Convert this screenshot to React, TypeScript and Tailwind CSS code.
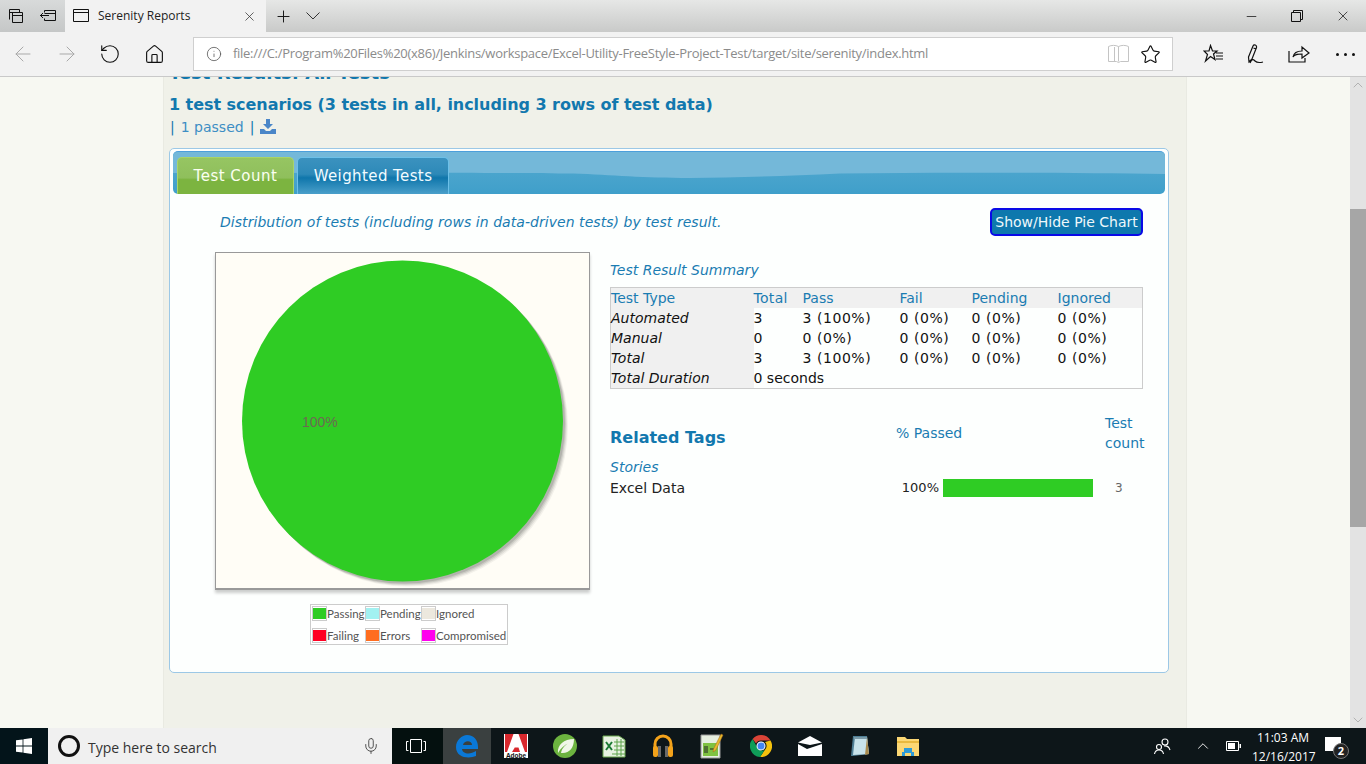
import { ChevronDown, ChevronUp, Minus, Plus, X, ArrowLeft, ArrowRight, RotateCw, Home, Info, Star, Mic } from "lucide-react";

const verdana = "font-['DejaVu_Sans',sans-serif]";

const summaryRows = [
  { type: "Automated", total: "3", pass: "3 (100%)" },
  { type: "Manual", total: "0", pass: "0 (0%)" },
  { type: "Total", total: "3", pass: "3 (100%)" },
];

const legend = [
  { label: "Passing", color: "bg-[#2fcc24]", w: "w-[53px]" },
  { label: "Pending", color: "bg-[#a2f1f1]", w: "w-[56px]" },
  { label: "Ignored", color: "bg-[#ece8de]", w: "w-[87px]" },
  { label: "Failing", color: "bg-[#ff0022]", w: "w-[53px]" },
  { label: "Errors", color: "bg-[#ff6d1f]", w: "w-[56px]" },
  { label: "Compromised", color: "bg-[#ff00ee]", w: "w-[87px]" },
];

function TitleBar() {
  return (
    <div className="flex h-8 shrink-0 items-stretch bg-gradient-to-b from-[#e6e7e6] to-[#c9cac9] text-black">
      <div className="flex w-[65px] shrink-0 items-center bg-gradient-to-b from-[#d8dada] to-[#c5c7c7]">
        <svg className="ml-[9px] h-[14px] w-[14px]" viewBox="0 0 14 14" fill="none" stroke="#111">
          <path d="M.5 10.500V.5h10v3M.5 3.500h10" />
          <path d="M3.500 13.500v-10h10v10zM3.500 6.500h10" />
        </svg>
        <svg className="ml-[17px] h-[12px] w-[16px]" viewBox="0 0 16 12" fill="none" stroke="#111">
          <path d="M4.500 2.500V.5h11v10h-11V8.500M0 5.500h9M3 3 .5 5.500 3 8M4.500 3.500h11" />
        </svg>
      </div>
      <div className="flex w-[201px] shrink-0 items-center bg-[#f2f2f2]">
        <svg className="ml-[8px] h-[14px] w-[16px]" viewBox="0 0 16 14" fill="none" stroke="#111">
          <path d="M.5.5h15v12h-15zM.5 3.500h15" />
        </svg>
        <span className="ml-[9px] font-['Open_Sans',sans-serif] text-[12px] text-[#222]">Serenity Reports</span>
        <X className="ml-auto mr-[9px] h-[15px] w-[15px] text-[#333]" strokeWidth={1.2} />
      </div>
      <Plus className="ml-[8px] mt-[7px] h-[19px] w-[19px] text-[#111]" strokeWidth={1.2} />
      <svg className="ml-[13px] mt-[12px] h-[8px] w-[14px]" viewBox="0 0 14 8" fill="none" stroke="#333">
        <path d="m.5.5 6.500 6.500 6.500-6.500" />
      </svg>
      <div className="ml-auto flex items-center">
        <Minus className="mr-[32px] h-[15px] w-[15px] text-[#111]" strokeWidth={1.2} />
        <svg className="mr-[32px] h-[12px] w-[12px]" viewBox="0 0 12 12" fill="none" stroke="#111">
          <path d="M.5 2.500h9v9h-9zM2.500 2.500v-2h9v9h-2" />
        </svg>
        <X className="mr-[15px] h-[16px] w-[16px] text-[#111]" strokeWidth={1.1} />
      </div>
    </div>
  );
}

function AddressBar() {
  return (
    <div className="flex h-[45px] shrink-0 items-center border-b border-[#c9c9c9] bg-[#f2f2f2]">
      <ArrowLeft className="ml-[11px] h-[24px] w-[24px] text-[#a9a9a9]" strokeWidth={1} />
      <ArrowRight className="ml-[20px] h-[24px] w-[24px] text-[#a9a9a9]" strokeWidth={1} />
      <RotateCw className="ml-[20px] h-[22px] w-[22px] -scale-x-100 text-[#111]" strokeWidth={1.2} />
      <Home className="ml-[23px] h-[21px] w-[21px] text-[#111]" strokeWidth={1.3} />
      <div className="ml-[28px] flex h-[34px] w-[980px] items-center border border-[#cfcfcf] bg-white">
        <Info className="ml-[12px] h-[16px] w-[16px] text-[#555]" strokeWidth={1.2} />
        <span className="ml-[11px] font-['Open_Sans',sans-serif] text-[13px] tracking-[-0.29px] text-[#8b8b8b]">
          file:///C:/Program%20Files%20(x86)/Jenkins/workspace/Excel-Utility-FreeStyle-Project-Test/target/site/serenity/index.html
        </span>
        <svg className="ml-auto h-[20px] w-[21px]" viewBox="0 0 21 20" fill="none" stroke="#c4c4c4">
          <path d="M.5 2.500c3-1.500 7-1.500 10 0 3-1.500 7-1.500 10 0v15h-8l-2 1-2-1h-8zM10.500 2.500v15M6.500 3v14" />
        </svg>
        <Star className="ml-[11px] mr-[11px] h-[21px] w-[21px] text-[#111]" strokeWidth={1.3} />
      </div>
      <svg className="ml-[30px] h-[20px] w-[21px]" viewBox="0 0 21 20" fill="none" stroke="#111" strokeWidth="1.2">
        <path d="M7.500 1.500 9.500 7H14L10.500 10l1.500 5.500L7.500 12.500 2.500 17 4.500 10.500 1 7h5zM13 9h7M13 12h7M13 15h7" />
      </svg>
      <svg className="ml-[23px] h-[21px] w-[19px]" viewBox="0 0 19 21" fill="none" stroke="#111" strokeWidth="1.2">
        <path d="M1.500 13 6 2c1-2 4-1 3.500 1.500L5 15l-3 3zM6.500 4 9 5M3 19c2-4 3-4 5-2 2 2 4 2 8 1" />
      </svg>
      <svg className="ml-[22px] h-[20px] w-[22px]" viewBox="0 0 22 20" fill="none" stroke="#111" strokeWidth="1.2">
        <path d="M1 7v11h16v-4M5 13c1-5 5-6 9-6V3l7 6-7 5v-4c-4 0-7 0-9 3z" />
      </svg>
      <div className="ml-[26px] flex gap-[5px]">
        <span className="h-[3px] w-[3px] rounded-full bg-[#111]" />
        <span className="h-[3px] w-[3px] rounded-full bg-[#111]" />
        <span className="h-[3px] w-[3px] rounded-full bg-[#111]" />
      </div>
    </div>
  );
}

function Tabs() {
  return (
    <div className="relative mx-[3px] mt-[2px] flex h-[43px] items-end overflow-hidden rounded-[5px] border-t border-[#4c9fdb] bg-gradient-to-b from-[#55aad0] to-[#3f9fca] pl-[4px]">
      <svg className="absolute inset-0 h-full w-full" viewBox="0 0 992 42" preserveAspectRatio="none">
        <path d="M0 0h992v22C900 21 780 20 667 21.500 610 24 560 26 517 26 470 26 440 23 400 21.500 300 20 100 21 0 21z" fill="#74b8d9" />
      </svg>
      <div className={`relative flex h-[37px] w-[117px] items-center justify-center rounded-t-[5px] border border-b-0 border-[#a8d468] bg-[linear-gradient(#96c562_0,#8fbf5c_55%,#7cb440_60%,#7cb440_100%)] text-[15px] tracking-[0.5px] text-[#fbfff0] ${verdana}`}>
        Test Count
      </div>
      <div className={`relative ml-[3px] flex h-[37px] w-[152px] items-center justify-center rounded-t-[5px] border border-b-0 border-[#6cc0e8] bg-[linear-gradient(#3b92bf_0,#2d89b8_45%,#0f76ab_55%,#4a9fca_100%)] text-[15px] tracking-[0.4px] text-[#f2fbff] ${verdana}`}>
        Weighted Tests
      </div>
    </div>
  );
}

function PieChart() {
  return (
    <div>
      <div className="relative h-[338px] w-[375px] border border-b-2 border-[#999] bg-[#fffdf6] shadow-[0_3px_3px_rgba(0,0,0,0.2)]">
        <svg className="h-full w-full" viewBox="0 0 373 335">
          <circle cx="191.500" cy="173" r="160.500" fill="#0000000c" />
          <circle cx="190.500" cy="172" r="160.500" fill="#00000012" />
          <circle cx="189.500" cy="171" r="160.500" fill="#00000018" />
          <circle cx="188.500" cy="170" r="160.500" fill="#0000001e" />
          <circle cx="186.500" cy="168" r="160.500" fill="#2fcc24" />
        </svg>
        <span className="absolute left-[86px] top-[161px] font-['Liberation_Sans',sans-serif] text-[14px] leading-4 text-[#6d6a52]">100%</span>
      </div>
      <div className="ml-[95px] mt-[14px] flex w-[198px] flex-wrap border border-[#ccc] bg-white font-['Lato',sans-serif] text-[11.500px] text-[#545454]">
        {legend.map((item) => (
          <div key={item.label} className={`flex h-[17px] items-center ${item.w} [&:nth-child(-n+3)]:mb-[5px]`}>
            <span className="ml-px flex h-[15px] w-[15px] shrink-0 items-center justify-center border border-[#ccc]">
              <span className={`h-[11px] w-[13px] ${item.color}`} />
            </span>
            <span className="whitespace-nowrap">{item.label}</span>
          </div>
        ))}
      </div>
    </div>
  );
}

function SummaryTable() {
  const th = "h-5 p-0 text-left font-normal text-[#1a7cb2]";
  const label = "h-5 bg-[#f0f0f0] p-0 italic";
  const pct = "p-0 tracking-[0.55px]";
  return (
    <table className="w-[533px] table-fixed border-collapse border border-[#ccc] text-[14px] leading-5 text-[#111]">
      <colgroup>
        <col className="w-[143px]" />
        <col className="w-[49px]" />
        <col className="w-[97px]" />
        <col className="w-[72px]" />
        <col className="w-[86px]" />
        <col />
      </colgroup>
      <thead>
        <tr className="bg-[#f0f0f0]">
          <th className={th}>Test Type</th>
          <th className={`${th} tracking-[0.3px]`}>Total</th>
          <th className={th}>Pass</th>
          <th className={th}>Fail</th>
          <th className={th}>Pending</th>
          <th className={th}>Ignored</th>
        </tr>
      </thead>
      <tbody>
        {summaryRows.map((row) => (
          <tr key={row.type}>
            <td className={label}>{row.type}</td>
            <td className="p-0">{row.total}</td>
            <td className={pct}>{row.pass}</td>
            <td className={pct}>0 (0%)</td>
            <td className={pct}>0 (0%)</td>
            <td className={pct}>0 (0%)</td>
          </tr>
        ))}
        <tr>
          <td className={label}>Total Duration</td>
          <td className="p-0" colSpan={5}>0 seconds</td>
        </tr>
      </tbody>
    </table>
  );
}

function RelatedTags() {
  return (
    <div className="mt-[26px]">
      <div className="flex h-[40px] items-stretch text-[14px] leading-5 text-[#1a7cb2]">
        <h3 className="mt-[13px] w-[286px] text-[16px] font-bold leading-5 text-[#1278ae]">Related Tags</h3>
        <span className="mt-[8px] w-[209px]">% Passed</span>
        <span className="-mt-[2px] w-[38px]">Test count</span>
      </div>
      <div className="mt-[2px] bg-[#fdfffe]">
        <div className="h-5 text-[14px] italic leading-5 text-[#1a7cb2]">Stories</div>
        <div className="mt-[2px] flex h-[18px] items-center text-[14px] text-[#222]">
          <span className="w-[290px]">Excel Data</span>
          <span className="w-[39px] text-right text-[13px]">100%</span>
          <span className="ml-[4px] h-[18px] w-[150px] bg-[#2fcc24]" />
          <span className="ml-[22px] text-[12px] text-[#666]">3</span>
        </div>
      </div>
    </div>
  );
}

function Report() {
  return (
    <div className={`w-[1024px] shrink-0 border-x border-[#e9eae2] bg-[#f0f1e9] pl-[5px] ${verdana}`}>
      <h1 className="-mt-[14px] h-[20px] text-[18px] font-bold leading-5 text-[#1278ae]">Test Results: All Tests</h1>
      <h2 className="mt-[12px] text-[16px] font-bold leading-5 tracking-[-0.05px] text-[#1278ae]">
        1 test scenarios (3 tests in all, including 3 rows of test data)
      </h2>
      <div className="mt-[2px] flex h-5 items-center text-[14px] text-[#3d8ec4]">
        <span className="ml-px text-[#1278ae]">|</span>
        <span className="ml-[6px]">1 passed</span>
        <span className="ml-[6px] text-[#1278ae]">|</span>
        <svg className="ml-[6px] h-[15px] w-[16px] -translate-y-px" viewBox="0 0 16 15" fill="#4a86c8">
          <path d="M6 0h4v5h3L8 10 3 5h3zM0 10h4l2 2h4l2-2h4v5H0z" />
        </svg>
      </div>
      <div className="mt-[11px] h-[525px] w-[1000px] rounded-[5px] border border-[#9cc8e6] bg-[#fdfffe]">
        <Tabs />
        <div className="mt-[14px] flex h-[28px] items-center justify-between pl-[50px] pr-[25px]">
          <p className="text-[14px] italic tracking-[0.05px] text-[#1a7cb2]">
            Distribution of tests (including rows in data-driven tests) by test result.
          </p>
          <button
            type="button"
            className="h-[28px] w-[153px] rounded-[5px] border-2 border-[#0a0ae6] bg-[#0e78ad] text-[14px] text-[#eef8fb]"
          >
            Show/Hide Pie Chart
          </button>
        </div>
        <div className="mt-[16px] flex gap-[20px] pl-[45px]">
          <PieChart />
          <div className="w-[533px]">
            <p className="mb-[7px] mt-[8px] text-[14px] italic leading-5 text-[#1a7cb2]">Test Result Summary</p>
            <SummaryTable />
            <RelatedTags />
          </div>
        </div>
      </div>
    </div>
  );
}

function Page() {
  return (
    <div className="flex min-h-0 flex-1 overflow-hidden bg-[#f7f8f2]">
      <div className="w-[163px] shrink-0" />
      <Report />
      <div className="flex-1" />
      <div className="flex w-[16px] shrink-0 flex-col items-center bg-[#e3e3e3] text-[#999]">
        <ChevronUp className="h-[16px] w-[16px]" strokeWidth={1} />
        <div className="mt-[116px] h-[318px] w-full bg-[#a6a6a6]" />
        <ChevronDown className="mt-auto h-[16px] w-[16px]" strokeWidth={1} />
      </div>
    </div>
  );
}

function TaskIcons() {
  return (
    <div className="flex items-center">
      <div className="flex h-9 w-[49px] items-center justify-center">
        <svg className="h-[24px] w-[24px]" viewBox="0 0 24 24">
          <path d="M0 0h24v24H0z" fill="#fff" />
          <path d="M1 0h22v18H1z" fill="#d8282d" />
          <path d="M9.500 0h5L21 18h-5l-1.500-4.500h-4L12 9.500l-1.500 4.500L8 18H3z" fill="#fff" />
          <text x="12" y="23.500" textAnchor="middle" fontSize="6.500" fontWeight="700" fill="#111" fontFamily="Liberation Sans">Adobe</text>
        </svg>
      </div>
      <div className="flex h-9 w-[49px] items-center justify-center">
        <svg className="h-[24px] w-[24px]" viewBox="0 0 24 24">
          <circle cx="12" cy="12" r="12" fill="#6cb33f" />
          <path d="M5 19C4 11 11 5 21 5c0 9-5 15-13 14 1-5 4-8 8-10-5 2-8 5-11 10z" fill="#f1f7e8" />
        </svg>
      </div>
      <div className="flex h-9 w-[49px] items-center justify-center">
        <svg className="h-[24px] w-[24px]" viewBox="0 0 24 24">
          <path d="M1 2h16l6 4v17H1z" fill="#e8f2e2" stroke="#6aa84f" />
          <path d="M12 8h10M12 12h10M12 16h10M10 20h13M15 5v17M19 5v17" stroke="#5da34a" />
          <path d="M3 7h9v10H3z" fill="#e8f2e2" />
          <path d="m4 8 6 8m0-8-6 8" stroke="#1c7a34" strokeWidth="2" />
        </svg>
      </div>
      <div className="flex h-9 w-[49px] items-center justify-center">
        <svg className="h-[24px] w-[22px]" viewBox="0 0 22 24" fill="none">
          <path d="M3 15V10a8 8 0 0 1 16 0v5" stroke="#f4a31b" strokeWidth="3" />
          <rect x="1" y="12" width="5" height="11" rx="2" fill="#f4a31b" />
          <rect x="16" y="12" width="5" height="11" rx="2" fill="#f4a31b" />
          <rect x="6" y="12" width="3" height="11" fill="#6a6a6a" />
          <rect x="13" y="12" width="3" height="11" fill="#6a6a6a" />
        </svg>
      </div>
      <div className="flex h-9 w-[49px] items-center justify-center">
        <svg className="h-[26px] w-[24px]" viewBox="0 0 24 26">
          <path d="M1 2h19v23H1z" fill="#e6efe0" stroke="#9a9a9a" />
          <path d="M3 10h15v13H3z" fill="#7fc241" />
          <path d="M5 13v7M7 13v7M10 16h5" stroke="#222" />
          <path d="m21 1 2 1-7 15-3 2 .5-3z" fill="#e8b92c" stroke="#a4661a" strokeWidth=".5" />
        </svg>
      </div>
      <div className="flex h-9 w-[49px] items-center justify-center">
        <svg className="h-[22px] w-[22px]" viewBox="0 0 22 22">
          <path d="M11 0a11 11 0 0 1 9.500 5.500H11A5.500 5.500 0 0 0 6 8.500L2.600 3.900A11 11 0 0 1 11 0z" fill="#db4437" />
          <path d="M20.500 5.500A11 11 0 0 1 10 22l4.800-7A5.500 5.500 0 0 0 15 7z" fill="#f4c20d" />
          <path d="M10 22A11 11 0 0 1 2.600 3.900L7 12a5.500 5.500 0 0 0 7.600 3z" fill="#0f9d58" />
          <circle cx="11" cy="11" r="4.500" fill="#fff" />
          <circle cx="11" cy="11" r="3.500" fill="#4285f4" />
        </svg>
      </div>
      <div className="flex h-9 w-[49px] items-center justify-center">
        <svg className="h-[20px] w-[24px]" viewBox="0 0 24 20" fill="#fff">
          <path d="m12 0 12 6.500L12 9 0 6.500zM0 8l9 5 15-5v12H0z" />
        </svg>
      </div>
      <div className="flex h-9 w-[49px] items-center justify-center">
        <svg className="h-[22px] w-[22px]" viewBox="0 0 22 22">
          <path d="M5 1h14l2 18-16 2H3z" fill="#4f7f95" />
          <path d="M7 2h12l2 17-16 1z" fill="#c8e3ea" />
          <path d="M19 2l2 17-4 1z" fill="#a88a4d" />
          <path d="M6 2h13v2H6z" fill="#7a9aa8" />
        </svg>
      </div>
      <div className="flex h-9 w-[49px] items-center justify-center">
        <svg className="h-[20px] w-[22px]" viewBox="0 0 22 20">
          <path d="M0 1h8l2 2h12v17H0z" fill="#fbd774" />
          <path d="M0 5h22v2H0z" fill="#e8b93f" />
          <path d="M7 12h8v4h2v4h-3v-3H8v3H5v-4h2z" fill="#2d9bd8" />
        </svg>
      </div>
    </div>
  );
}

function Taskbar() {
  return (
    <div className="flex h-9 shrink-0 items-stretch bg-[#0d1619] text-white">
      <div className="flex w-[48px] items-center justify-center bg-[#03141a]">
        <svg className="h-[16px] w-[16px]" viewBox="0 0 16 16" fill="#fff">
          <path d="M0 2.300 6.600 1.400v6.200H0zM7.400 1.300 16 0v7.600H7.400zM0 8.400h6.600v6.200L0 13.700zM7.400 8.400H16V16l-8.600-1.300z" />
        </svg>
      </div>
      <div className="flex w-[344px] items-center bg-[#f0f0f0]">
        <span className="ml-[10px] h-[22px] w-[22px] rounded-full border-[3px] border-[#111]" />
        <span className="ml-[8px] translate-y-px font-['Open_Sans',sans-serif] text-[14px] text-[#333]">Type here to search</span>
        <Mic className="ml-auto mr-[12px] h-[18px] w-[18px] text-[#444]" strokeWidth={1.2} />
      </div>
      <div className="flex w-[51px] items-center justify-center bg-[#04100f] pr-[3px]">
        <svg className="h-[14px] w-[20px]" viewBox="0 0 20 14" fill="none" stroke="#fff">
          <path d="M4.500.5h11v13h-11zM2.500 2.500h-2v9h2M17.500 2.500h2v9h-2" />
        </svg>
      </div>
      <div className="flex w-[48px] items-center justify-center bg-[#3a4040]">
        <svg className="h-[24px] w-[24px]" viewBox="0 0 24 24" fill="#0a78d7">
          <path d="M12 1c7 0 11 5 11 12v2H7c.500 5 8 6 14 2v5c-7 3-20 2-20-9C1 6 7 1 12 1zm-4 10h9c0-5-8-5-9 0z" />
        </svg>
      </div>
      <TaskIcons />
      <div className="ml-auto flex items-center">
        <svg className="h-[17px] w-[17px]" viewBox="0 0 17 17" fill="none" stroke="#fff" strokeWidth="1.1">
          <circle cx="11" cy="4" r="3" />
          <circle cx="5" cy="9" r="2.500" />
          <path d="M.5 16c.500-3 2-4 4.500-4s4 1 4.500 4M10 8c3-.5 5 1 6 4" />
        </svg>
        <ChevronUp className="ml-[23px] h-[18px] w-[18px]" strokeWidth={1.2} />
        <svg className="ml-[14px] h-[10px] w-[15px]" viewBox="0 0 15 10">
          <path d="M.5.5h12v9H.5z" fill="none" stroke="#fff" />
          <path d="M2 2h7v6H2zM13.500 3H15v4h-1.500z" fill="#fff" />
        </svg>
        <div className="ml-[11px] w-[62px] pt-[2px] text-center font-['Open_Sans',sans-serif] text-[12px] leading-[19px]">
          <div>11:03 AM</div>
          <div>12/16/2017</div>
        </div>
        <div className="relative mb-[4px] ml-[11px] mr-[25px] h-[14px] w-[16px] bg-white">
          <span className="absolute -bottom-[8px] -right-[8px] flex h-[16px] w-[16px] items-center justify-center rounded-full border border-[#777] bg-[#222] font-['Open_Sans',sans-serif] text-[11px] font-bold">
            2
          </span>
        </div>
      </div>
    </div>
  );
}

export default function App() {
  return (
    <div className="flex h-[764px] w-[1366px] flex-col overflow-hidden">
      <TitleBar />
      <AddressBar />
      <Page />
      <Taskbar />
    </div>
  );
}
